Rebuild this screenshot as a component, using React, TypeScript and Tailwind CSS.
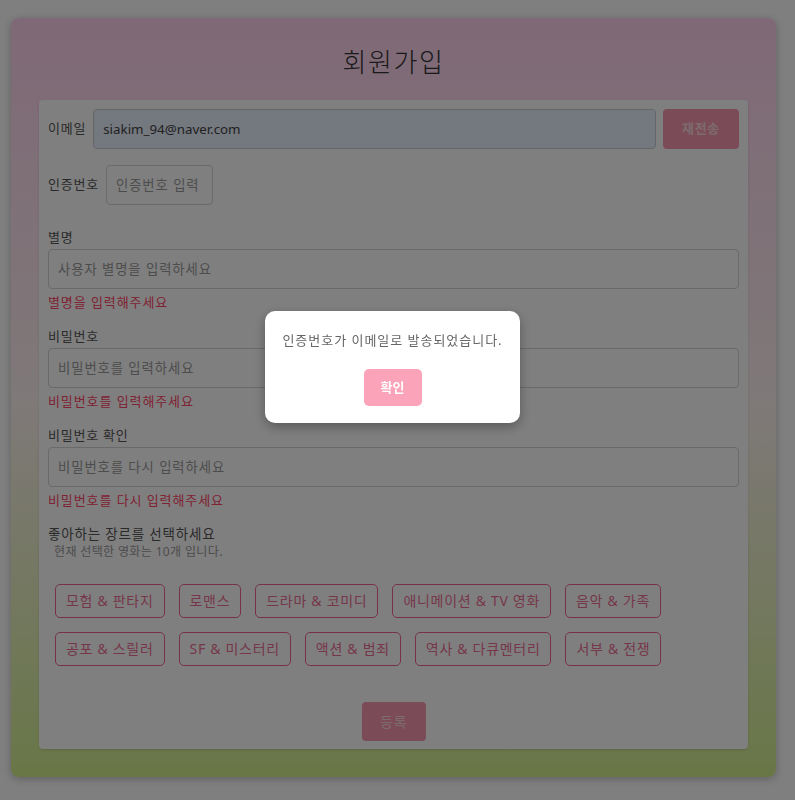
const genres = [
  "모험 & 판타지",
  "로맨스",
  "드라마 & 코미디",
  "애니메이션 & TV 영화",
  "음악 & 가족",
  "공포 & 스릴러",
  "SF & 미스터리",
  "액션 & 범죄",
  "역사 & 다큐멘터리",
  "서부 & 전쟁",
];

// 라벨 + 입력창 + 에러 메시지 한 묶음
function Field({ label, placeholder, error, type = "text" }: { label: string; placeholder: string; error: string; type?: string }) {
  return (
    <div>
      <label className="block text-[13px] leading-[20px] tracking-[0.06em] text-[#555] mb-[2px]">{label}</label>
      <input
        type={type}
        placeholder={placeholder}
        className="block w-full h-[40px] rounded-[4px] border border-[#d4d4d4] bg-white px-[9px] text-[13.333px] tracking-[0.07em] text-[#333] placeholder:text-[#9a9a9a] outline-none"
      />
      <p className="mt-[3px] text-[13px] leading-[20px] tracking-[0.07em] text-[#ff4566]">{error}</p>
    </div>
  );
}

export default function App() {
  return (
    <div className="relative min-h-screen bg-white font-['Noto_Sans','Noto_Sans_CJK_KR',sans-serif]">
      <div className="pt-[18px] pl-[11px] pb-[22px]">
        <div className="w-[765px] rounded-lg bg-gradient-to-b from-[#ffd2ed] via-[#fff2f2] to-[#d2ee8e] px-[28px] pb-[28px] shadow-[0_2px_8px_rgba(0,0,0,0.25)]">
          <h1 className="flex h-[82px] items-center justify-center pt-[6px] text-[26px] font-light tracking-[0.06em] text-[#333]">
            회원가입
          </h1>

          <div className="rounded-[4px] bg-white px-[9px] pt-[9px] pb-[8px] shadow-sm">
            {/* 이메일 */}
            <div className="flex h-[40px] items-center gap-[7px]">
              <label className="text-[13px] tracking-[0.06em] text-[#555]">이메일</label>
              <input
                defaultValue="siakim_94@naver.com"
                className="h-[40px] flex-1 rounded-[4px] border border-[#c9cdd3] bg-[#e8f0fe] px-[9px] text-[13.333px] text-[#444] outline-none"
              />
              <button className="h-[40px] w-[76px] rounded-[4px] bg-[#f799b0] text-[13px] font-semibold tracking-[0.05em] text-[#fbd5df]">
                재전송
              </button>
            </div>

            {/* 인증번호 */}
            <div className="mt-[16px] flex h-[40px] items-center gap-[7px]">
              <label className="text-[13px] tracking-[0.06em] text-[#555]">인증번호</label>
              <input
                placeholder="인증번호 입력"
                className="h-[40px] w-[107px] rounded-[4px] border border-[#d4d4d4] bg-white px-[9px] text-[13.333px] tracking-[0.07em] placeholder:text-[#9a9a9a] outline-none"
              />
            </div>

            <div className="mt-[22px] flex flex-col gap-[14px]">
              <Field label="별명" placeholder="사용자 별명을 입력하세요" error="별명을 입력해주세요" />
              <Field label="비밀번호" placeholder="비밀번호를 입력하세요" error="비밀번호를 입력해주세요" type="password" />
              <Field label="비밀번호 확인" placeholder="비밀번호를 다시 입력하세요" error="비밀번호를 다시 입력해주세요" type="password" />
            </div>

            {/* 장르 선택 */}
            <div className="mt-[14px]">
              <p className="text-[13.5px] leading-[20px] tracking-[0.06em] text-[#555]">좋아하는 장르를 선택하세요</p>
              <p className="pl-[6px] text-[12px] leading-[16px] tracking-[0.03em] text-[#999]">현재 선택한 영화는 10개 입니다.</p>
            </div>
            <div className="mt-[17px] flex flex-wrap">
              {genres.map((g) => (
                <button
                  key={g}
                  className="m-[7px] h-[34px] rounded-[5px] border border-[#f0658f] bg-white px-[10px] text-[14px] leading-[20px] tracking-[0.05em] text-[#ec6f94]"
                >
                  {g}
                </button>
              ))}
            </div>

            <div className="mt-[29px] flex justify-center">
              <button className="h-[39px] w-[64px] rounded-[4px] bg-[#f799b0] text-[14px] tracking-[0.05em] text-[#fbd5df]">등록</button>
            </div>
          </div>
        </div>
      </div>

      {/* 모달 */}
      <div className="fixed inset-0 bg-black/50">
        <div className="absolute left-[265px] top-[311px] flex w-[255px] flex-col items-center rounded-[10px] bg-white pt-[19px] pb-[17px] shadow-[0_4px_12px_rgba(0,0,0,0.3)]">
          <p className="text-[13px] leading-[20px] tracking-[0.075em] text-[#666]">인증번호가 이메일로 발송되었습니다.</p>
          <button className="mt-[19px] h-[37px] w-[58px] rounded-[5px] bg-[#fba3b8] text-[13px] font-semibold text-white">
            확인
          </button>
        </div>
      </div>
    </div>
  );
}
